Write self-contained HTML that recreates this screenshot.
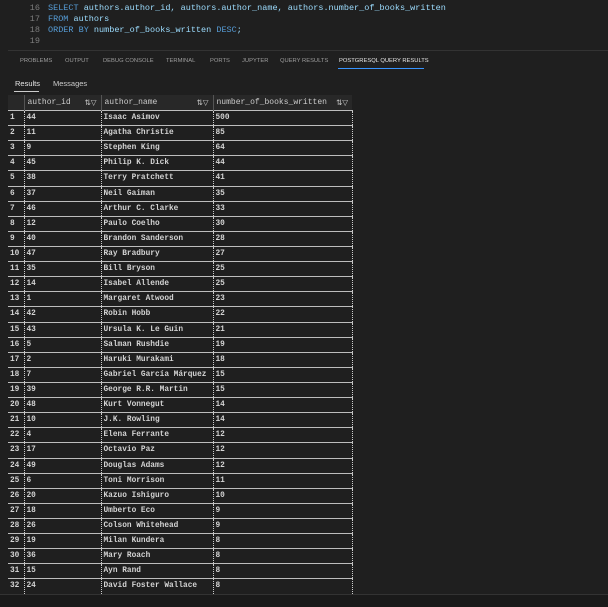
<!DOCTYPE html>
<html><head><style>
body{margin:0;width:608px;height:607px;background:#1f1f1f;overflow:hidden;position:relative;font-family:"Liberation Mono",monospace;color:#ccc}
.ed{position:absolute;left:0;top:0;width:608px;height:49px;background:#1f1f1f}
.ln{position:absolute;left:20px;width:20px;text-align:right;font-size:8.5px;color:#7d7d7d}
.code{position:absolute;left:48px;font-size:8.5px;white-space:pre;color:#9cdcfe}
.k{color:#569cd6}
.tabs{position:absolute;top:58px;left:20px;font-family:"Liberation Sans",sans-serif;font-size:5.8px;color:#9d9d9d;white-space:nowrap}
.tabs span{position:absolute;top:0}
.rt{position:absolute;top:79px;font-family:"Liberation Sans",sans-serif;font-size:7.5px;color:#ccc}
table{position:absolute;left:8px;top:95px;border-collapse:collapse;font-size:7.8px;table-layout:fixed}
td{height:14.12px;padding:0 0 0 2px;border-top:1px solid #bdbdbd;border-left:1px dotted #ccc;color:#d4d4d4;white-space:nowrap;line-height:14px;font-weight:bold;overflow:hidden}
td:first-child{border-left:none}
tr td:last-child{border-right:1px dotted #ccc}
th{height:15px;background:#282828;font-weight:normal;text-align:left;padding:0 0 0 3px;border-left:1px solid #555;color:#ccc;font-size:8px;position:relative}
th:first-child{border-left:none}
.ic{position:absolute;right:4px;top:3px;font-family:"DejaVu Sans",sans-serif;font-size:7.5px}
</style></head><body>
<div class="ed">
<div class="ln" style="top:3px">16</div><div class="code" style="top:3px"><span class="k">SELECT</span> authors.author_id, authors.author_name, authors.number_of_books_written</div>
<div class="ln" style="top:14px">17</div><div class="code" style="top:14px"><span class="k">FROM</span> authors</div>
<div class="ln" style="top:25px">18</div><div class="code" style="top:25px"><span class="k">ORDER BY</span> number_of_books_written <span class="k">DESC</span>;</div>
<div class="ln" style="top:36px">19</div>
</div>
<div style="position:absolute;left:8px;top:50px;width:600px;height:1px;background:#333"></div>
<div class="tabs">
<span style="left:0">PROBLEMS</span><span style="left:45px">OUTPUT</span><span style="left:83px">DEBUG CONSOLE</span><span style="left:146px">TERMINAL</span><span style="left:190px">PORTS</span><span style="left:222px">JUPYTER</span><span style="left:260px">QUERY RESULTS</span><span style="left:319px;color:#e7e7e7">POSTGRESQL QUERY RESULTS</span>
</div>
<div style="position:absolute;left:338px;top:68px;width:86px;height:1px;background:#3794ff"></div>
<div class="rt" style="left:15px;color:#e7e7e7">Results</div><div class="rt" style="left:53px">Messages</div>
<div style="position:absolute;left:14px;top:91px;width:25px;height:1px;background:#ccc"></div>
<table>
<colgroup><col style="width:16px"><col style="width:77px"><col style="width:112px"><col style="width:139px"></colgroup>
<tr><th></th><th>author_id<span class="ic">⇅▽</span></th><th>author_name<span class="ic">⇅▽</span></th><th>number_of_books_written<span class="ic">⇅▽</span></th></tr>
<tr><td>1</td><td>44</td><td>Isaac Asimov</td><td>500</td></tr>
<tr><td>2</td><td>11</td><td>Agatha Christie</td><td>85</td></tr>
<tr><td>3</td><td>9</td><td>Stephen King</td><td>64</td></tr>
<tr><td>4</td><td>45</td><td>Philip K. Dick</td><td>44</td></tr>
<tr><td>5</td><td>38</td><td>Terry Pratchett</td><td>41</td></tr>
<tr><td>6</td><td>37</td><td>Neil Gaiman</td><td>35</td></tr>
<tr><td>7</td><td>46</td><td>Arthur C. Clarke</td><td>33</td></tr>
<tr><td>8</td><td>12</td><td>Paulo Coelho</td><td>30</td></tr>
<tr><td>9</td><td>40</td><td>Brandon Sanderson</td><td>28</td></tr>
<tr><td>10</td><td>47</td><td>Ray Bradbury</td><td>27</td></tr>
<tr><td>11</td><td>35</td><td>Bill Bryson</td><td>25</td></tr>
<tr><td>12</td><td>14</td><td>Isabel Allende</td><td>25</td></tr>
<tr><td>13</td><td>1</td><td>Margaret Atwood</td><td>23</td></tr>
<tr><td>14</td><td>42</td><td>Robin Hobb</td><td>22</td></tr>
<tr><td>15</td><td>43</td><td>Ursula K. Le Guin</td><td>21</td></tr>
<tr><td>16</td><td>5</td><td>Salman Rushdie</td><td>19</td></tr>
<tr><td>17</td><td>2</td><td>Haruki Murakami</td><td>18</td></tr>
<tr><td>18</td><td>7</td><td>Gabriel García Márquez</td><td>15</td></tr>
<tr><td>19</td><td>39</td><td>George R.R. Martin</td><td>15</td></tr>
<tr><td>20</td><td>48</td><td>Kurt Vonnegut</td><td>14</td></tr>
<tr><td>21</td><td>10</td><td>J.K. Rowling</td><td>14</td></tr>
<tr><td>22</td><td>4</td><td>Elena Ferrante</td><td>12</td></tr>
<tr><td>23</td><td>17</td><td>Octavio Paz</td><td>12</td></tr>
<tr><td>24</td><td>49</td><td>Douglas Adams</td><td>12</td></tr>
<tr><td>25</td><td>6</td><td>Toni Morrison</td><td>11</td></tr>
<tr><td>26</td><td>20</td><td>Kazuo Ishiguro</td><td>10</td></tr>
<tr><td>27</td><td>18</td><td>Umberto Eco</td><td>9</td></tr>
<tr><td>28</td><td>26</td><td>Colson Whitehead</td><td>9</td></tr>
<tr><td>29</td><td>19</td><td>Milan Kundera</td><td>8</td></tr>
<tr><td>30</td><td>36</td><td>Mary Roach</td><td>8</td></tr>
<tr><td>31</td><td>15</td><td>Ayn Rand</td><td>8</td></tr>
<tr><td>32</td><td>24</td><td>David Foster Wallace</td><td>8</td></tr>
</table>
<div style="position:absolute;left:0;top:594px;width:608px;height:1px;background:#333"></div>
<div style="position:absolute;left:0;top:595px;width:608px;height:12px;background:#1a1a1a"></div>
</body></html>
